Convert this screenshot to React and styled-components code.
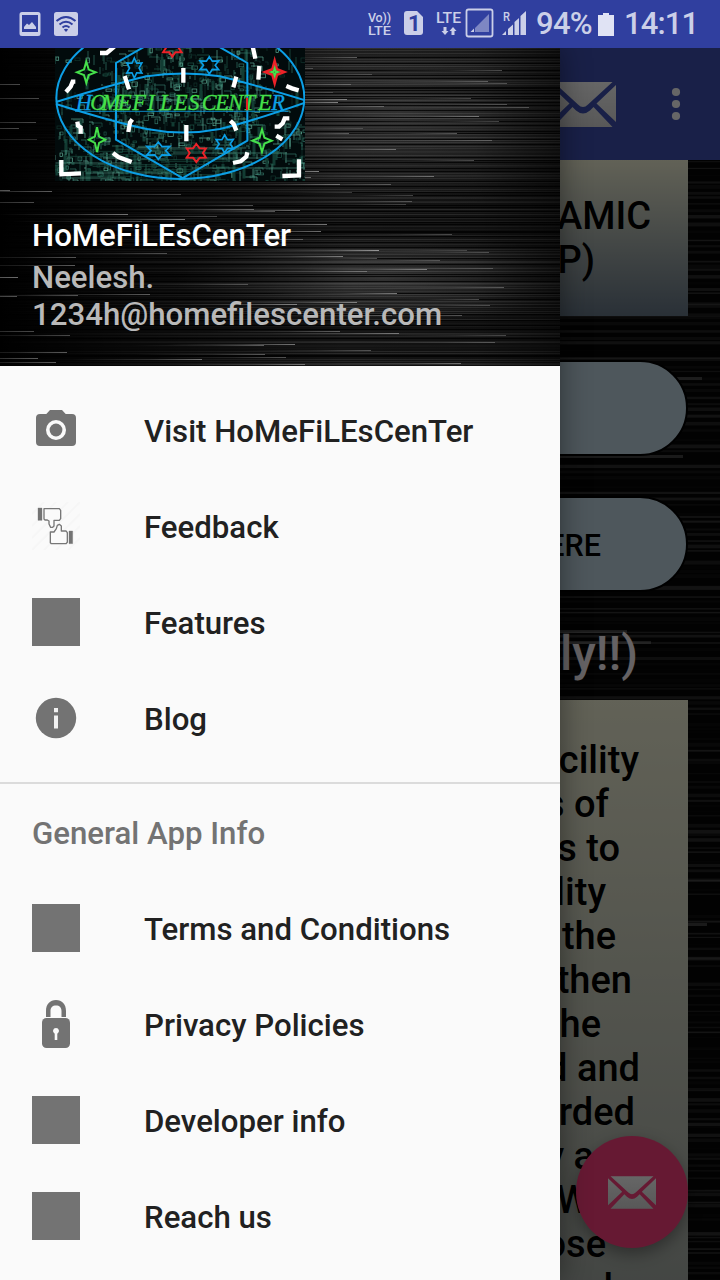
import React from 'react';
import styled, { createGlobalStyle } from 'styled-components';

const GlobalStyle = createGlobalStyle`
  * { box-sizing: border-box; }
  body { margin: 0; background: #000; font-family: Roboto, "Noto Sans", sans-serif; font-weight: 500; }
  svg { display: block; flex: none; }
`;

const Screen = styled.div`
  width: 720px;
  height: 1280px;
  overflow: hidden;
  display: flex;
  flex-direction: column;
`;

const StatusBar = styled.header`
  height: 48px;
  flex: none;
  display: flex;
  align-items: center;
  justify-content: space-between;
  padding: 0 18px 0 18px;
  background: #303f9f;
  color: #cbcfe8;
`;

const StatusGroup = styled.div`
  display: flex;
  align-items: center;
  gap: ${(p) => p.$gap || 0}px;
`;

const StatusText = styled.span`
  font-size: 31px;
  line-height: 48px;
  width: ${(p) => p.$w}px;
  margin-left: ${(p) => p.$ml || 0}px;
  letter-spacing: ${(p) => p.$track || 0}px;
  white-space: nowrap;
`;

const Stage = styled.div`
  position: relative;
  flex: 1;
  min-height: 0;
`;

const Page = styled.div`
  height: 100%;
  overflow: hidden;
  display: flex;
  flex-direction: column;
`;

const Toolbar = styled.div`
  height: 112px;
  flex: none;
  display: flex;
  align-items: center;
  justify-content: flex-end;
  gap: 54px;
  padding-right: 38px;
  background: #3f51b5;
`;

const Content = styled.main`
  position: relative;
  isolation: isolate;
  flex: 1;
  min-height: 0;
  padding: 0 32px;
  display: flex;
  flex-direction: column;
  overflow: hidden;
`;

const Backdrop = styled.div`
  position: absolute;
  inset: 0;
  z-index: -1;
  overflow: hidden;
  background: #000;
`;

const Card = styled.section`
  flex: none;
  height: ${(p) => p.$h}px;
  padding-top: ${(p) => p.$top}px;
  background: linear-gradient(#f4f4d9, ${(p) => p.$end});
`;

const CardLine = styled.p`
  margin: 0;
  padding-right: ${(p) => p.$inset}px;
  text-align: right;
  white-space: pre;
  font-size: 38px;
  line-height: 44px;
  color: #000;
`;

const Pill = styled.div`
  flex: none;
  height: 96px;
  margin-top: ${(p) => p.$gap}px;
  padding-right: 85px;
  border: 2px solid #000;
  border-radius: 48px;
  background: #c3d9e7;
  color: #000;
  font-size: 30.5px;
  line-height: 95px;
  text-align: right;
`;

const Heading = styled.h2`
  margin: 34px 0 0;
  height: 74px;
  flex: none;
  padding-right: 50px;
  text-align: right;
  font-weight: 500;
  font-size: 48px;
  line-height: 56px;
  color: #fdf5fa;
`;

const Fab = styled.div`
  position: absolute;
  right: 32px;
  bottom: 32px;
  width: 112px;
  height: 112px;
  border-radius: 50%;
  background: #ff4081;
  display: flex;
  align-items: center;
  justify-content: center;
  box-shadow: 0 6px 16px rgba(0, 0, 0, 0.35);
`;

const Scrim = styled.div`
  position: absolute;
  inset: 0;
  background: rgba(0, 0, 0, 0.6);
`;

const Drawer = styled.aside`
  position: absolute;
  top: 0;
  bottom: 0;
  left: 0;
  width: 560px;
  background: #fafafa;
  box-shadow: 0 0 28px rgba(0, 0, 0, 0.45);
  clip-path: inset(0 -40px 0 0);
`;

const DrawerHeader = styled.div`
  position: relative;
  height: 318px;
  overflow: hidden;
  isolation: isolate;
`;

const LogoSlot = styled.div`
  padding-left: 55px;
`;

const AccountName = styled.div`
  margin: 37px 0 0 32px;
  font-size: 31.2px;
  line-height: 36px;
  color: #fff;
`;

const AccountMail = styled.div`
  margin: 5px 0 0 32px;
  font-size: 31.2px;
  line-height: 37px;
  color: #b9b9b9;
`;

const Menu = styled.nav`
  padding: ${(p) => (p.$first ? '16px 0' : '0')};
`;

const MenuRow = styled.div`
  height: 96px;
  padding-left: 32px;
  display: flex;
  align-items: center;
  gap: 64px;
  font-size: 31.2px;
  line-height: 36px;
  color: #212121;
  white-space: nowrap;
`;

const Label = styled.span`
  padding-top: 3px;
`;

const SquareIcon = styled.div`
  width: 48px;
  height: 48px;
  background: #737373;
`;

const Subheader = styled.div`
  height: 98px;
  border-top: 2px solid #dbdbdb;
  padding: 2px 0 0 32px;
  display: flex;
  align-items: center;
  font-size: 31.2px;
  color: #737373;
`;

function seeded(seed) {
  let s = seed;
  return () => {
    s = (s * 1664525 + 1013904223) % 4294967296;
    return s / 4294967296;
  };
}

/* Bright streak ends of the header artwork: x, y, brightness */
const streaks = [
  [357, 10, 0.5], [502, 23, 0.4], [313, 21, 0.3], [372, 27, 0.3], [488, 34, 0.42], [507, 36, 0.35],
  [351, 37, 0.35], [333, 45, 0.25], [471, 51, 0.35], [347, 52, 0.6], [338, 55, 0.7], [384, 59, 0.4],
  [507, 57, 0.35], [529, 60, 0.35], [479, 69, 0.55], [499, 74, 0.35], [363, 81, 0.25], [457, 86, 0.45],
  [349, 86, 0.45], [492, 93, 0.35], [396, 102, 0.5], [474, 113, 0.38], [319, 124, 0.7], [434, 129, 0.5],
  [311, 130, 0.5], [20, 37, 0.4], [39, 51, 0.4], [36, 75, 0.4], [19, 81, 0.4], [37, 92, 0.25],
  [340, 137, 0.45], [391, 137, 0.4], [352, 145, 0.3], [181, 147, 0.35], [52, 144, 0.5], [10, 143, 0.5],
  [413, 148, 0.35], [412, 154, 0.35], [406, 157, 0.3], [34, 155, 0.4], [253, 158, 0.4], [254, 162, 0.5],
  [300, 163, 0.55], [275, 164, 0.45], [128, 167, 0.6], [217, 169, 0.35], [185, 172, 0.65], [142, 174, 0.4],
  [327, 177, 0.65], [321, 184, 0.6], [452, 187, 0.35], [303, 192, 0.4], [379, 203, 0.75], [467, 203, 0.3],
  [489, 205, 0.35], [167, 206, 0.4], [343, 209, 0.6], [377, 211, 0.4], [76, 210, 0.45], [440, 213, 0.35],
  [75, 218, 0.5], [427, 222, 0.6], [493, 221, 0.3], [367, 224, 0.4], [18, 230, 0.6], [248, 237, 0.35],
  [504, 240, 0.4], [397, 246, 0.65], [150, 247, 0.45], [78, 248, 0.45], [17, 249, 0.45], [479, 252, 0.4],
  [357, 255, 0.6], [297, 257, 0.6], [490, 258, 0.35], [392, 268, 0.4], [462, 268, 0.4], [34, 284, 0.4],
  [340, 284, 0.45], [399, 286, 0.55], [70, 288, 0.4], [506, 288, 0.35], [495, 295, 0.35], [295, 297, 0.6],
  [264, 298, 0.45], [371, 303, 0.4], [67, 305, 0.5], [265, 307, 0.45], [286, 310, 0.4], [202, 312, 0.55],
  [38, 311, 0.5], [56, 315, 0.5], [461, 316, 0.5], [305, 317, 0.5],
];

function HeaderArt() {
  const r = seeded(71);
  const rows = Array.from({ length: 160 }, (_, i) => ({
    y: i * 2 + Math.floor(r() * 2), a: 0.02 + r() * 0.1, dark: r() < 0.35,
  }));
  return (
    <Backdrop>
      <svg width="560" height="318">
        <defs>
          <linearGradient id="streak"><stop offset="0" stopColor="#fff" stopOpacity="0" /><stop offset=".6" stopColor="#fff" stopOpacity=".35" /><stop offset="1" stopColor="#fff" /></linearGradient>
          <linearGradient id="sideFade"><stop offset="0" stopColor="#000" /><stop offset=".3" stopColor="#000" stopOpacity=".5" /><stop offset=".62" stopColor="#000" stopOpacity="0" /><stop offset=".85" stopColor="#000" stopOpacity=".1" /><stop offset="1" stopColor="#000" stopOpacity=".5" /></linearGradient>
          <radialGradient id="glow"><stop offset="0" stopColor="#fff" stopOpacity=".14" /><stop offset="1" stopColor="#fff" stopOpacity="0" /></radialGradient>
        </defs>
        <rect width="560" height="318" fill="#121212" />
        <ellipse cx="400" cy="65" rx="240" ry="95" fill="url(#glow)" />
        <ellipse cx="385" cy="230" rx="210" ry="45" fill="url(#glow)" />
        {rows.map((row, i) => (
          <rect key={i} y={row.y} width="560" height="1" fill={row.dark ? '#000' : '#fff'} opacity={row.dark ? 0.75 : row.a} />
        ))}
        <rect width="560" height="318" fill="url(#sideFade)" />
        {streaks.map(([x, y, o], i) => (
          <rect key={i} x={x - 130} y={y - 1} width="130" height="1" fill="url(#streak)" opacity={o * 0.7} />
        ))}
      </svg>
    </Backdrop>
  );
}

function PageArt() {
  const r = seeded(19);
  const rows = Array.from({ length: 190 }, (_, i) => ({ y: i * 6 + r() * 5, h: 1 + r() * 3, a: r() * 0.19 }));
  return (
    <Backdrop>
      <svg width="720" height="1120">
        <rect width="720" height="1120" fill="#060606" />
        {rows.map((row, i) => <rect key={i} y={row.y} width="720" height={row.h} fill="#fff" opacity={row.a} />)}
        {[[702, 217], [683, 295], [627, 470], [651, 481], [707, 763]].map(([x, y]) => (
          <rect key={y} width={x} y={y} height="3" fill="#fff" opacity=".24" />
        ))}
      </svg>
    </Backdrop>
  );
}

function Circuit() {
  const r = seeded(404);
  const parts = [];
  for (let i = 0; i < 1150; i++) {
    const x = 15 + Math.floor(r() * 250) * 3;
    const y = Math.floor(r() * 133) * 3;
    const edge = Math.abs(x - 390) > 240 && y < 220;
    if (edge && r() < 0.75) continue;
    const k = r();
    const c = ['#1f5a4c', '#35796a', '#5fae97', '#12352e'][Math.floor(r() * 4)];
    const n = 6 + Math.floor(r() * 12) * 3;
    if (k < 0.42) parts.push(<path key={i} d={`M${x} ${y}v${n}`} stroke={c} />);
    else if (k < 0.66) parts.push(<path key={i} d={`M${x} ${y}h${n}v${6 + Math.floor(r() * 4) * 3}`} stroke={c} />);
    else if (k < 0.9) parts.push(<rect key={i} x={x} y={y} width={6 + r() * 12} height={5 + r() * 10} stroke={c} />);
    else parts.push(<path key={i} d={`M${x} ${y}v${n * 1.5}`} stroke="#123c33" strokeWidth="9" />);
  }
  for (let i = 0; i < 20; i++) {
    const x = 15 + r() * 420;
    parts.push(<path key={`h${i}`} d={`M${x} ${300 + i * 5}h${120 + r() * 330}`} stroke={i % 3 ? '#1d5043' : '#4c927f'} />);
  }
  return <g fill="none" strokeWidth="2">{parts}</g>;
}

function starPath(cx, cy, rx, ry, points, inner) {
  const out = [];
  for (let i = 0; i < points * 2; i++) {
    const a = (Math.PI * i) / points - Math.PI / 2;
    const k = i % 2 ? inner : 1;
    out.push(`${cx + Math.cos(a) * rx * k} ${cy + Math.sin(a) * ry * k}`);
  }
  return `M${out.join('L')}Z`;
}

function Logo() {
  return (
    <svg width="250" height="133" viewBox="15 0 750 399">
      <rect x="15" width="750" height="399" fill="#020b0c" />
      <Circuit />
      <g fill="none" stroke="#0c9fe6" strokeWidth="6">
        <ellipse cx="391" cy="150" rx="372" ry="243" />
        <path d="M18 162Q205 105 290 85Q400 68 510 85Q620 112 765 157" />
        <path d="M18 168Q190 222 290 243Q400 264 510 243Q610 218 765 164" />
        <path d="M285 -5L198 45V275L398 390L592 278V45L505 -5" />
        <path d="M75 190H715" strokeWidth="2.5" />
        <path d={starPath(253, 60, 26, 30, 6, 0.55)} strokeWidth="5" />
        <path d={starPath(478, 52, 32, 26, 6, 0.55)} strokeWidth="5" />
        <path d={starPath(325, 308, 40, 26, 6, 0.55)} strokeWidth="5" />
        <path d={starPath(524, 288, 30, 27, 6, 0.55)} strokeWidth="5" />
      </g>
      <g fill="none" stroke="#ec2228" strokeWidth="6">
        <path d={starPath(367, -1, 32, 27, 6, 0.58)} />
        <path d={starPath(439, 315, 33, 27, 6, 0.6)} />
        <path d={starPath(674, 72, 28, 33, 4, 0.34)} strokeWidth="8" />
      </g>
      <g fill="none" stroke="#45e04b" strokeWidth="6">
        <path d={starPath(109, 73, 28, 32, 4, 0.36)} />
        <path d={starPath(141, 275, 25, 37, 4, 0.36)} />
        <path d={starPath(636, 278, 29, 34, 4, 0.36)} />
        <path d={starPath(674, 72, 10, 11, 4, 0.36)} />
      </g>
      <text
        x="77 121 155 204 247 292 330 372 415 455 496 535 578 624 664"
        y="187"
        fontFamily="Liberation Serif, serif"
        fontStyle="italic"
        fontWeight="400"
        fontSize="67"
        fill="#45e04b"
        stroke="#45e04b"
        strokeWidth=".8"
      >
        <tspan fill="#0c9fe6" stroke="#0c9fe6">H</tspan>OMEFILESCENTE<tspan fill="#0c9fe6" stroke="#0c9fe6">R</tspan>
      </text>
      <path d="M591 149V187" stroke="#e62222" strokeWidth="6" />
      <g fill="none" stroke="#fff" strokeWidth="13">
        <path d="M150 15H170L193 -4M608 -5L616 32M400 60V104M224 84L237 124M559 86L550 118M628 54L625 95" />
        <path d="M76 101H68L62 116L48 132M709 114L726 121L746 127M82 221L84 233L92 238V257M247 214L240 223L235 252" />
        <path d="M409 231V280M541 218L551 228L559 248M718 211H704L698 226L687 236H674M679 263L697 274" />
        <path d="M189 315L205 327L245 342M592 313L589 326L572 340L549 345M34 336V381M28 379L93 376M747 334V386M753 382L697 384" />
      </g>
    </svg>
  );
}

function Envelope({ width, height }) {
  return (
    <svg width={width} height={height} viewBox="0 0 66 45">
      <defs>
        <linearGradient id="paper" gradientUnits="userSpaceOnUse" x1="0" y1="0" x2="0" y2="45">
          <stop offset="0" stopColor="#fff" /><stop offset="1" stopColor="#dcdcdc" />
        </linearGradient>
      </defs>
      <g fill="url(#paper)">
        <path d="M3.500 0H62.500L38 22.500Q33 27.500 28 22.500Z" />
        <path d="M0 3L19.500 21.500L0 40ZM66 3L46.500 21.500L66 40Z" />
        <path d="M3.500 45L22.500 25L26 28.500Q33 34.500 40 28.500L43.500 25L62.500 45Z" />
      </g>
    </svg>
  );
}

function CameraIcon() {
  return (
    <svg width="48" height="48" viewBox="0 0 48 48" fill="#737373">
      <path fillRule="evenodd" d="M18 4L14.300 8H8a4 4 0 0 0-4 4V36a4 4 0 0 0 4 4H40a4 4 0 0 0 4-4V12a4 4 0 0 0-4-4H33.700L30 4ZM24 34a10 10 0 1 1 0-20a10 10 0 0 1 0 20Z" />
      <circle cx="24" cy="24" r="6.400" />
    </svg>
  );
}

function FeedbackIcon() {
  return (
    <svg width="48" height="48" viewBox="0 0 144 144">
      <path d="M0 36L36 0M0 72L72 0M0 108L108 0M0 144L144 0M36 144L144 36M72 144L144 72M108 144L144 108" stroke="#f6f6f6" strokeWidth="6" />
      <g fill="#fafafa" stroke="#777" strokeWidth="4" strokeLinejoin="round">
        <path d="M18 18h12v37H18z" fill="#737373" strokeWidth="1" />
        <path d="M36 20H82L86 25V50L82 55H66V72L62 76H56L51 66V57L46 54H39L36 51Z" />
        <path d="M55 90H66L73 80L76 70L82 67L88 72V87H102L106 92V121L102 125H58L55 122Z" />
        <path d="M111 87h11v38h-11z" fill="#737373" strokeWidth="1" />
      </g>
    </svg>
  );
}

function InfoIcon() {
  return (
    <svg width="48" height="48" viewBox="0 0 48 48">
      <circle cx="24" cy="24" r="20.200" fill="#737373" />
      <path d="M22 14h4v4.200h-4zM22 21.500h4v13h-4z" fill="#f2f2f2" />
    </svg>
  );
}

function LockIcon() {
  return (
    <svg width="48" height="48" viewBox="0 0 48 48" fill="#737373">
      <path d="M14 17V11C14 4 18 0 24 0S34 4 34 11V17H29.500V11C29.500 7.500 27.500 5.500 24 5.500S18.500 7.500 18.500 11V17Z" />
      <rect x="10" y="18" width="28" height="30" rx="4.500" />
      <path d="M24 28a3 3 0 0 1 1.300 5.700V40h-2.600V33.700A3 3 0 0 1 24 28Z" fill="#fafafa" />
    </svg>
  );
}

function StatusIcons() {
  return (
    <svg width="160" height="48" viewBox="367 0 160 48" fill="#cbcfe8" fontFamily="Roboto, sans-serif" fontWeight="700">
      <text x="368" y="21.500" fontSize="12.500" textLength="23" fontWeight="500">Vo))</text>
      <text x="368" y="35" fontSize="13" textLength="23" lengthAdjust="spacingAndGlyphs" fontWeight="500">LTE</text>
      <path d="M407 11H417L423 17V32Q423 35 420 35H407Q404 35 404 32V14Q404 11 407 11Z" />
      <text x="408" y="31" fontSize="22" fill="#303f9f">1</text>
      <text x="436" y="23" fontSize="14.500" textLength="25" lengthAdjust="spacingAndGlyphs" fontWeight="500">LTE</text>
      <path d="M443.500 27h3v4h2l-3.500 4l-3.500-4h2zM451.500 35h3v-4h2l-3.500-4l-3.500 4h2z" />
      <rect x="466.500" y="9.500" width="26" height="27" rx="2" fill="none" stroke="#cbcfe8" strokeWidth="1.800" />
      <path d="M475 32V28L489 14V32Z" opacity=".5" />
      <path d="M470.500 32L474 28.500V32Z" />
      <text x="503" y="20.500" fontSize="12" textLength="7" lengthAdjust="spacingAndGlyphs" fontWeight="500">R</text>
      <path d="M502 35L506 31V35ZM508 35V29L513 24.500V35ZM514.500 35V22L519 18V35ZM520.500 35V16L526 11V35Z" />
    </svg>
  );
}

const firstMenu = [
  ['Visit HoMeFiLEsCenTer', CameraIcon],
  ['Feedback', FeedbackIcon],
  ['Features', SquareIcon],
  ['Blog', InfoIcon],
];
const secondMenu = [
  ['Terms and Conditions', SquareIcon],
  ['Privacy Policies', LockIcon],
  ['Developer info', SquareIcon],
  ['Reach us', SquareIcon],
];
const bodyLines = [
  ['cility', 49], ['s of', 79], ['s to', 68], ['lity', 82], ['the', 72], ['then', 56], ['he', 87],
  ['d and', 48], ['rded', 53], ['y a', 94], ['W', 98], ['ose', 82], ['d', 75],
];

function MenuList({ items, first }) {
  return (
    <Menu $first={first}>
      {items.map(([label, Icon]) => (
        <MenuRow key={label}><Icon /><Label>{label}</Label></MenuRow>
      ))}
    </Menu>
  );
}

export default function App() {
  return (
    <Screen>
      <GlobalStyle />
      <StatusBar>
        <StatusGroup $gap={12}>
          <svg width="24" height="24" viewBox="0 0 24 24" fill="#cbcfe8">
            <path fillRule="evenodd" d="M4 0H20Q22.500 0 22.500 2.500V21.500Q22.500 24 20 24H4Q1.500 24 1.500 21.500V2.500Q1.500 0 4 0ZM4 3V20H20V3Z" />
            <path d="M6 17V15L9 11.500L11 13L14 10L18 15V17Z" />
          </svg>
          <svg width="24" height="24" viewBox="0 0 24 24">
            <rect width="24" height="24" rx="2.500" fill="#cbcfe8" />
            <path d="M2.500 9Q12 1 21.500 9M5.500 12.500Q12 7 18.500 12.500M8.500 15.500Q12 12.500 15.500 15.500" fill="none" stroke="#303f9f" strokeWidth="2" />
            <path d="M9.800 17.500Q12 16 14.200 17.500L12 20Z" fill="#303f9f" />
          </svg>
        </StatusGroup>
        <StatusGroup>
          <StatusIcons />
          <StatusText $w={62} $ml={9} $track={-0.7}>94%</StatusText>
          <svg width="16" height="24" viewBox="0 0 16 24" fill="#e0e3f4"><path d="M0 3H5V1H11V3H16V24H0Z" /></svg>
          <StatusText $w={78} $ml={10} $track={-0.9}>14:11</StatusText>
        </StatusGroup>
      </StatusBar>
      <Stage>
        <Page>
          <Toolbar>
            <Envelope width={66} height={45} />
            <svg width="12" height="34" viewBox="0 0 12 34" fill="#fff"><circle cx="6" cy="5" r="4.100" /><circle cx="6" cy="17" r="4.100" /><circle cx="6" cy="29" r="4.100" /></svg>
          </Toolbar>
          <Content>
            <PageArt />
            <Card $h={156} $top={34} $end="#68798a">
              <CardLine $inset={37}>AMIC</CardLine>
              <CardLine $inset={93}>P)</CardLine>
            </Card>
            <Pill $gap={44} />
            <Pill $gap={40}>ERE</Pill>
            <Heading>ly!!)</Heading>
            <Card $h={640} $top={38} $end="#a2a9a5">
              {bodyLines.map(([text, inset]) => <CardLine key={text} $inset={inset}>{text}</CardLine>)}
            </Card>
          </Content>
        </Page>
        <Fab><Envelope width={48} height={33} /></Fab>
        <Scrim />
        <Drawer>
          <DrawerHeader>
            <HeaderArt />
            <LogoSlot><Logo /></LogoSlot>
            <AccountName>HoMeFiLEsCenTer</AccountName>
            <AccountMail>Neelesh.<br />1234h@homefilescenter.com</AccountMail>
          </DrawerHeader>
          <MenuList items={firstMenu} first />
          <Subheader>General App Info</Subheader>
          <MenuList items={secondMenu} />
        </Drawer>
      </Stage>
    </Screen>
  );
}
